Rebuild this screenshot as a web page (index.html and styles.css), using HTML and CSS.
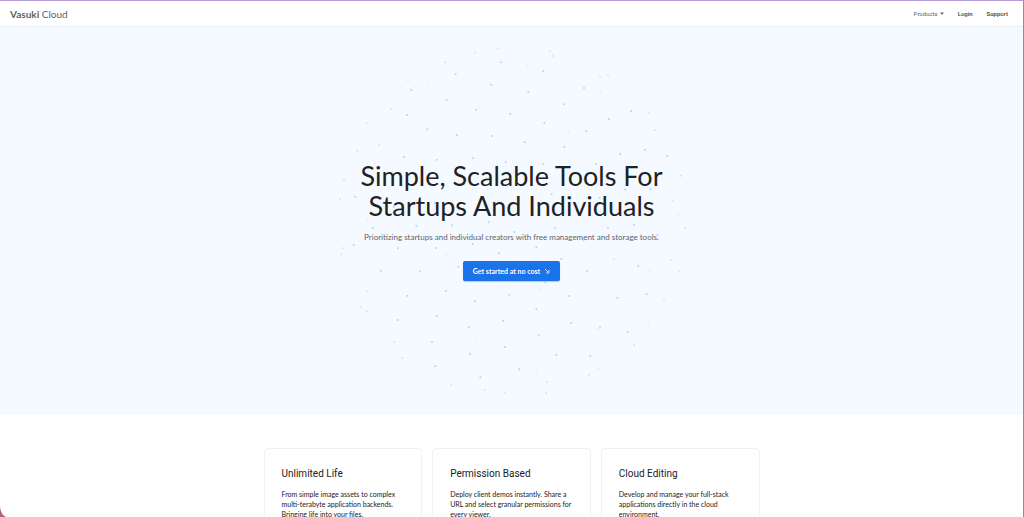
FILE: index.html
```html
<!DOCTYPE html>
<html lang="en">
<head>
<meta charset="utf-8">
<meta name="viewport" content="width=device-width, initial-scale=1">
<title>Vasuki Cloud</title>
<link rel="stylesheet" href="styles.css">
</head>
<body>
<div class="window">
<header class="topbar">
  <a class="brand" href="#"><b>Vasuki</b> Cloud</a>
  <nav class="nav">
    <button class="nav-item nav-menu" type="button">Products
      <svg class="caret" viewBox="0 0 4 3" aria-hidden="true"><path d="M0 0.5h4L2 2.8z"/></svg>
    </button>
    <a class="nav-item" href="#">Login</a>
    <a class="nav-item" href="#">Support</a>
  </nav>
</header>
<main>
<section class="hero">
  <svg class="dots" viewBox="0 0 1080 1110" aria-hidden="true">
    <g class="near">
      <path d="M377 118h0M484 149h0M350 196h0M438 224h0M231 240h0M292 283h0M381 300h0M486 303h0M222 366h0M320 374h0M429 370h0M513 82h0M244 165h0"/>
      <path transform="translate(540)" d="M100 109h0M222 159h0M55 170h0M163 208h0M1 236h0M103 264h0M229 289h0M297 252h0M363 228h0M44 322h0M163 336h0M331 357h0M405 345h0M471 363h0"/>
      <path transform="translate(0 360)" d="M76 125h0M191 156h0M314 145h0M128 219h0M259 212h0M366 211h0M476 202h0M204 280h0M318 279h0M428 267h0M507 295h0M271 349h0M385 335h0M153 347h0M71 270h0M527 22h0M145 76h0"/>
      <path transform="translate(540 360)" d="M100 28h0M258 28h0M125 118h0M269 128h0M421 103h0M345 104h0M135 218h0M13 231h0M221 256h0M79 277h0M154 312h0M232 348h0M385 333h0M372 209h0M294 218h0M442 239h0M68 173h0M200 167h0"/>
      <path transform="translate(0 735)" d="M232 47h0M348 33h0M435 64h0M538 44h0M320 109h0M203 120h0M417 142h0M519 122h0M306 186h0M420 222h0M525 201h0M316 259h0M451 292h0"/>
      <path transform="translate(540 735)" d="M105 7h0M178 48h0M322 53h0M79 87h0M184 129h0M270 142h0M86 166h0M139 225h0M241 229h0M353 157h0M410 43h0M27 268h0"/>
    </g>
    <g class="mid">
      <path d="M435 53h0M505 40h0M345 82h0M234 136h0M184 222h0M110 265h0M147 329h0M82 349h0"/>
      <path transform="translate(540)" d="M120 48h0M129 63h0M270 126h0M294 121h0M415 234h0M436 285h0"/>
      <path transform="translate(0 360)" d="M42 76h0M30 133h0M38 280h0M34 298h0"/>
      <path transform="translate(540 360)" d="M513 62h0M488 138h0M525 218h0M482 315h0M507 348h0M312 312h0"/>
      <path transform="translate(0 735)" d="M112 34h0M92 81h0M110 94h0M193 186h0M217 234h0M364 315h0M525 339h0M464 330h0"/>
      <path transform="translate(540 735)" d="M462 63h0M372 195h0M237 285h0M111 306h0M108 338h0"/>
    </g>
    <g class="far">
      <path d="M297 149h0M449 216h0M139 304h0"/>
      <path transform="translate(540)" d="M52 93h0M272 169h0M176 288h0"/>
      <path transform="translate(0 360)" d="M112 192h0M265 32h0M348 300h0"/>
      <path transform="translate(540 360)" d="M504 179h0M420 346h0M277 212h0M397 40h0"/>
      <path transform="translate(0 735)" d="M190 48h0M437 175h0M293 240h0"/>
      <path transform="translate(540 735)" d="M415 130h0M263 147h0M266 266h0M79 278h0M92 30h0"/>
    </g>
  </svg>
  <h1 class="title">Simple, Scalable Tools For<br>Startups And Individuals</h1>
  <p class="lead">Prioritizing startups and individual creators with free management and storage tools.</p>
  <a class="cta" href="#">Get started at no cost
    <svg class="cta-icon" viewBox="0 0 6 6" aria-hidden="true"><path d="M1 1l3 3M5 2V5H2"/></svg>
  </a>
</section>
<section class="cards">
  <article class="card"><h2>Unlimited Life</h2><p>From simple image assets to complex<br>multi-terabyte application backends.<br>Bringing life into your files.</p></article>
  <article class="card"><h2>Permission Based</h2><p>Deploy client demos instantly. Share a<br>URL and select granular permissions for<br>every viewer.</p></article>
  <article class="card"><h2>Cloud Editing</h2><p>Develop and manage your full-stack<br>applications directly in the cloud<br>environment.</p></article>
</section>
</main>
<svg class="corner" viewBox="0 0 6 12" aria-hidden="true"><path d="M0 0Q0 9 6 12H0z"/></svg>
</div>
</body>
</html>
```
FILE: styles.css
```css
* { box-sizing: border-box; }
body { margin: 0; font-family: Lato, "Open Sans", sans-serif; color: #202124; background: #fff; }
h1, h2, p { margin: 0; font-weight: 400; }
a { color: inherit; text-decoration: none; }
.window { position: relative; height: 100vh; overflow: hidden; border-top: 1px solid #b99bd6; border-right: 1px solid #8f8f93; }
.topbar { display: flex; align-items: center; justify-content: space-between; height: 26px; padding: 0 15px 0 10px; border-bottom: 1px solid #eceff1; color: #5f6368; }
.brand { font-size: 10px; line-height: 12px; }
.nav { display: flex; align-items: center; gap: 14px; }
.nav-item { display: flex; align-items: center; gap: 2px; padding: 0; border: 0; background: none; font: 500 6px/8px Roboto, sans-serif; color: #3c4043; }
.nav-menu { font-weight: 400; color: #5f6368; }
.caret { width: 4px; height: 3px; fill: #5f6368; }
.hero { position: relative; display: flex; flex-direction: column; align-items: center; padding: 134px 16px; background: #f4faff; text-align: center; }
.dots { position: absolute; top: 8px; left: 50%; width: 360px; height: 370px; margin-left: -182px; fill: none; stroke-width: 6; stroke-linecap: round; }
.near { stroke: #afd5fa; }
.mid { stroke: #cfe6fc; }
.far { stroke: #e6ecfd; }
.title { position: relative; font-size: 27px; line-height: 30px; }
.lead { position: relative; margin-top: 10px; font-size: 8px; line-height: 12px; color: #5f6368; }
.cta { position: relative; display: flex; align-items: center; gap: 4px; height: 20px; margin-top: 18px; padding: 0 10px; border-radius: 2px; background: #1a73e8; box-shadow: 0 1px 1px #a9c8f2; color: #fff; font-size: 7px; font-weight: 700; line-height: 10px; }
.cta-icon { width: 6px; height: 6px; fill: none; stroke: #fff; stroke-width: 0.8; }
.cards { display: grid; grid-template-columns: repeat(3, 1fr); gap: 10px; max-width: 496px; margin: 0 auto; padding: 33px 0; }
.card { padding: 18px 17px; border: 1px solid #f0f1f3; border-radius: 4px; }
.card h2 { font-size: 10px; line-height: 14px; font-family: Roboto, sans-serif; }
.card p { margin-top: 8px; font-size: 7px; line-height: 10px; white-space: nowrap; }
.corner { position: absolute; left: 0; bottom: 0; width: 6px; height: 12px; fill: #b4607a; }
```
